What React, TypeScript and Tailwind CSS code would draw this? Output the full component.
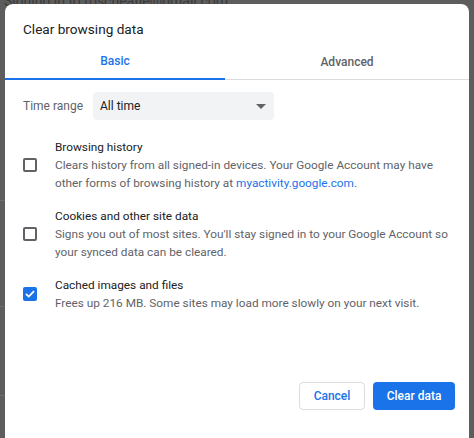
export default function App() {
  return (
    <div className="relative w-[474px] h-[438px] overflow-hidden bg-[#5d5d5d] font-['Roboto','Liberation_Sans',sans-serif]">
      {/* page behind the overlay */}
      <div className="absolute left-[4px] top-[-9px] text-[14px] text-[#3a3a3a] whitespace-nowrap">
        Signing in to roscheatle@gmail.com
      </div>
      <div className="absolute left-0 top-[200px] w-[5px] h-px bg-[#6e6e6e]" />
      <div className="absolute left-0 top-[306px] w-[5px] h-px bg-[#6e6e6e]" />
      <div className="absolute left-0 top-[395px] w-[5px] h-px bg-[#6e6e6e]" />

      <div className="relative ml-[5px] mt-[4px] w-[464px] h-[440px] bg-white rounded-t-[8px] flex flex-col">
        <div className="pl-[18px] pt-[16px] h-[40px] text-[13.6px] leading-[18px] text-[#202124]">
          Clear browsing data
        </div>

        <div className="flex h-[36px] border-b border-[#dadce0]">
          <div className="w-[220px] flex items-center justify-center text-[12px] font-medium text-[#1a73e8] border-b-2 border-[#1a73e8] -mb-px">
            Basic
          </div>
          <div className="flex-1 flex items-center justify-center text-[12px] font-medium text-[#5f6368]">
            Advanced
          </div>
        </div>

        <div className="flex items-center pl-[18px] mt-[12px]">
          <span className="w-[70px] text-[12px] text-[#5f6368]">Time range</span>
          <div className="w-[181px] h-[28px] bg-[#f1f3f4] rounded-[4px] flex items-center justify-between pl-[7px] pr-[8px]">
            <span className="text-[12px] text-[#202124]">All time</span>
            <svg width="10" height="5" viewBox="0 0 10 5">
              <path d="M0 0 L10 0 L5 5 Z" fill="#5f6368" />
            </svg>
          </div>
        </div>

        <div className="flex flex-col gap-[15px] mt-[18px] pl-[18px] pr-[12px]">
          <Item title="Browsing history">
            Clears history from all signed-in devices. Your Google Account may have other forms of browsing history at{" "}
            <span className="text-[#1a73e8]">myactivity.google.com.</span>
          </Item>
          <Item title="Cookies and other site data">
            Signs you out of most sites. You'll stay signed in to your Google Account so your synced data can be cleared.
          </Item>
          <Item title="Cached images and files" checked>
            Frees up 216 MB. Some sites may load more slowly on your next visit.
          </Item>
        </div>

        <div className="mt-auto mb-[34px] flex justify-end gap-[8px] pr-[14px]">
          <button className="w-[66px] h-[28px] rounded-[4px] border border-[#dadce0] bg-white text-[12px] font-medium text-[#1a73e8]">
            Cancel
          </button>
          <button className="w-[82px] h-[28px] rounded-[4px] bg-[#1a73e8] text-[12px] font-medium text-white">
            Clear data
          </button>
        </div>
      </div>
    </div>
  );
}

function Item({ title, checked, children }: { title: string; checked?: boolean; children: React.ReactNode }) {
  return (
    <div className="flex items-center">
      {checked ? (
        <div className="w-[14px] h-[14px] rounded-[2px] bg-[#1a73e8] flex items-center justify-center shrink-0">
          <svg width="10" height="8" viewBox="0 0 10 8">
            <path d="M1 4 L3.8 6.6 L9 1.2" fill="none" stroke="white" strokeWidth="1.8" />
          </svg>
        </div>
      ) : (
        <div className="w-[14px] h-[14px] rounded-[2px] border-2 border-[#5f6368] shrink-0" />
      )}
      <div className="ml-[18px] text-[11.8px] leading-[18px]">
        <div className="text-[#202124]">{title}</div>
        <div className="text-[#5f6368]">{children}</div>
      </div>
    </div>
  );
}
